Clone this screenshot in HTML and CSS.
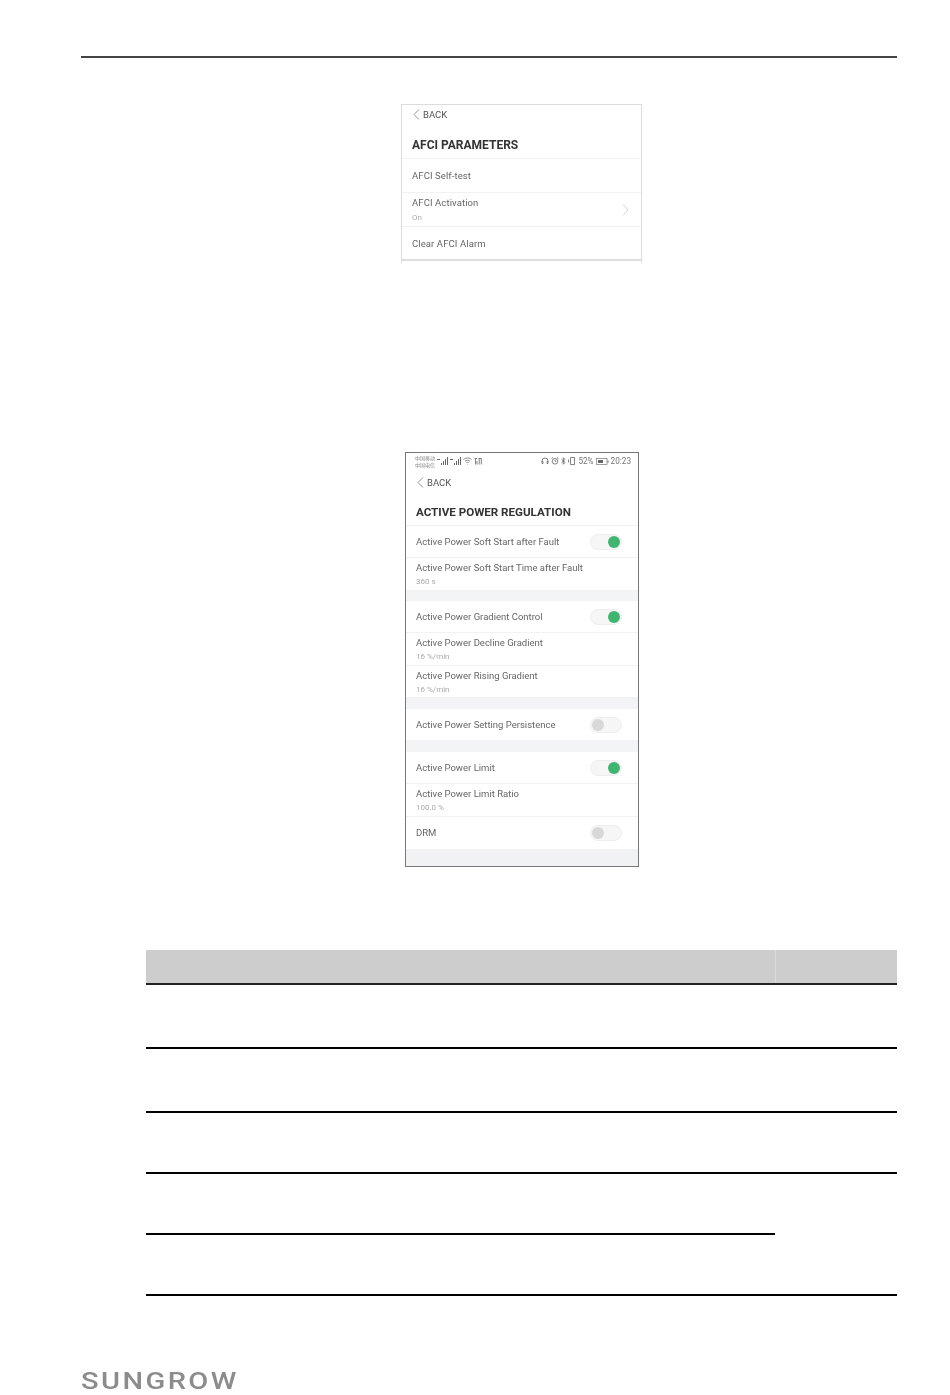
FILE: index.html
```html
<!DOCTYPE html>
<html>
<head>
  <meta charset="utf-8">
  <title>AFCI Parameters</title>
  <link rel="stylesheet" href="styles.css">
</head>
<body>
  <div class="page">
    <div class="page-rule"></div>

    <div class="screen screen-afci">
      <div class="back">
        <svg class="back-icon" width="7" height="11" viewBox="0 0 7 11"><path d="M6 .5 1 5.5l5 5" /></svg>
        BACK
      </div>
      <div class="title">AFCI PARAMETERS</div>
      <div class="row row-34"><span class="row-label">AFCI Self-test</span></div>
      <div class="row row-34">
        <div>
          <div class="row-label">AFCI Activation</div>
          <div class="row-value">On</div>
        </div>
        <svg class="chevron" width="7" height="12" viewBox="0 0 7 12"><path d="M1 .5 6 6l-5 5.5" /></svg>
      </div>
      <div class="row row-34 row-last"><span class="row-label">Clear AFCI Alarm</span></div>
    </div>

    <div class="screen screen-power">
      <div class="statusbar">
        <div class="status-left">
          <div class="carriers"><span>中国移动</span><span>中国电信</span></div>
          <svg width="11" height="8" viewBox="0 0 11 8"><path class="bars" d="M4 8h1V6H4zM6 8h1V4H6zM8 8h1V2H8zM10 8h1V0h-1z" /><path class="bars" d="M0 2h3v1H0z" /></svg>
          <svg width="11" height="8" viewBox="0 0 11 8"><path class="bars" d="M4 8h1V6H4zM6 8h1V4H6zM8 8h1V2H8zM10 8h1V0h-1z" /><path class="bars" d="M0 2h3v1H0z" /></svg>
          <svg class="line-icon" width="9" height="8" viewBox="0 0 9 8"><path d="M.5 2.500c2.300-2 5.700-2 8 0M2 4.200c1.500-1.300 3.500-1.300 5 0M3.300 5.800c.7-.6 1.700-.6 2.400 0M4.500 7.500v-.4" /></svg>
          <svg class="line-icon" width="8" height="8" viewBox="0 0 8 8"><path d="M.5 1.500h2.500M1.500 1.500v6M3 4v3.500M4.500 1.500h3M5.200 1.500v6M7.300 1.500v6" /></svg>
        </div>
        <div class="status-right">
          <svg class="line-icon" width="8" height="8" viewBox="0 0 8 8"><path d="M1 5V4a3 3 0 0 1 6 0v1M1 4.500h1v2H1zM6 4.500h1v2H6z" /></svg>
          <svg class="line-icon" width="8" height="8" viewBox="0 0 8 8"><circle cx="4" cy="4.300" r="2.800" /><path d="M4 2.800v1.600h1.200M.5 1.500 2 .5M7.500 1.500 6 .5" /></svg>
          <svg class="line-icon" width="5" height="8" viewBox="0 0 5 8"><path d="M.5 2.200 4 5.500 2.300 7.300V.7L4 2.500.5 5.800" /></svg>
          <svg class="line-icon" width="8" height="8" viewBox="0 0 8 8"><path d="M2.500.5h4v7h-4zM.5 2.500v3" /></svg>
          <span class="status-text">52%</span>
          <svg class="battery" width="13" height="7" viewBox="0 0 13 7"><rect x=".5" y=".5" width="10.500" height="6" /><path class="battery-fill" d="M2 2h5v3H2z" /><path class="battery-fill" d="M11.500 2.500h1v2h-1z" /></svg>
          <span class="status-text">20:23</span>
        </div>
      </div>
      <div class="back back-power">
        <svg class="back-icon" width="7" height="11" viewBox="0 0 7 11"><path d="M6 .5 1 5.500l5 5" /></svg>
        BACK
      </div>
      <div class="title title-power">ACTIVE POWER REGULATION</div>

      <div class="row row-32">
        <span class="row-label">Active Power Soft Start after Fault</span>
        <span class="toggle toggle-on"></span>
      </div>
      <div class="row row-33">
        <div>
          <div class="row-label">Active Power Soft Start Time after Fault</div>
          <div class="row-value">360 s</div>
        </div>
      </div>
      <div class="gap"></div>
      <div class="row row-32">
        <span class="row-label">Active Power Gradient Control</span>
        <span class="toggle toggle-on"></span>
      </div>
      <div class="row row-33">
        <div>
          <div class="row-label">Active Power Decline Gradient</div>
          <div class="row-value">16 %/min</div>
        </div>
      </div>
      <div class="row row-32">
        <div>
          <div class="row-label">Active Power Rising Gradient</div>
          <div class="row-value">16 %/min</div>
        </div>
      </div>
      <div class="gap gap-wide"></div>
      <div class="row row-32">
        <span class="row-label">Active Power Setting Persistence</span>
        <span class="toggle"></span>
      </div>
      <div class="gap gap-wide"></div>
      <div class="row row-32">
        <span class="row-label">Active Power Limit</span>
        <span class="toggle toggle-on"></span>
      </div>
      <div class="row row-33">
        <div>
          <div class="row-label">Active Power Limit Ratio</div>
          <div class="row-value">100.0 %</div>
        </div>
      </div>
      <div class="row row-33">
        <span class="row-label">DRM</span>
        <span class="toggle"></span>
      </div>
      <div class="screen-foot"></div>
    </div>

    <div class="table">
      <div class="table-head">
        <div class="cell-main"></div>
        <div class="cell-side"></div>
      </div>
      <div class="table-row tr-64"><div class="cell-main"></div><div class="cell-side"></div></div>
      <div class="table-row tr-64"><div class="cell-main"></div><div class="cell-side"></div></div>
      <div class="table-row tr-61"><div class="cell-main"></div><div class="cell-side"></div></div>
      <div class="table-row tr-61"><div class="cell-main"></div><div class="cell-side cell-merged"></div></div>
      <div class="table-row tr-61"><div class="cell-main"></div><div class="cell-side"></div></div>
    </div>

    <div class="logo">SUNGROW</div>
  </div>
</body>
</html>
```

FILE: styles.css
```css
html, body {
  margin: 0;
  padding: 0;
  background: #fff;
}

.page {
  width: 950px;
  height: 1395px;
  overflow: hidden;
  padding-top: 56px;
  box-sizing: border-box;
  font-family: Roboto, "Liberation Sans", sans-serif;
  color: #666;
}

.page-rule {
  margin: 0 53px 0 81px;
  height: 2px;
  background: #444;
}

.screen {
  background: #fff;
  box-sizing: border-box;
  overflow: hidden;
  filter: blur(0.3px);
}

.screen-afci {
  width: 241px;
  height: 159px;
  margin: 46px 0 0 401px;
  border: 1px solid #dcdcdc;
  border-bottom: none;
}

.screen-power {
  width: 234px;
  height: 415px;
  margin: 189px 0 0 405px;
  border: 1px solid #777;
}

/* header of both phone shots */
.back {
  display: flex;
  align-items: center;
  gap: 3px;
  height: 18px;
  padding-left: 11px;
  font-size: 9.5px;
  color: #555;
}

.back-icon, .chevron {
  fill: none;
  stroke: #777;
  stroke-width: 0.8;
}

.chevron {
  stroke: #ccc;
}

.title {
  height: 36px;
  padding: 15px 0 0 10px;
  box-sizing: border-box;
  font-size: 12px;
  font-weight: 700;
  color: #333;
  border-bottom: 1px solid #f2f2f2;
}

.back-power {
  height: 20px;
}

.title-power {
  height: 34px;
  padding-top: 13px;
  font-size: 11.6px;
}

/* list rows */
.row {
  display: flex;
  align-items: center;
  justify-content: space-between;
  padding: 0 16px 0 10px;
  box-sizing: border-box;
  border-bottom: 1px solid #f2f2f2;
}

.screen-afci .row {
  padding-right: 12px;
}

.screen-afci .row-label {
  letter-spacing: 0.1px;
}

.screen-afci .row-value {
  margin-top: 4px;
}

.row-34 { height: 34px; }
.row-33 { height: 33px; }
.row-32 { height: 32px; }

.row-last {
  padding-top: 1px;
  border-bottom: 2px solid #ddd;
}

.row-label {
  font-size: 9.5px;
  line-height: 12px;
}

.row-value {
  margin-top: 3px;
  font-size: 8px;
  line-height: 9px;
  color: #aaa;
}

.gap {
  height: 10px;
  background: #f3f4f6;
}

.gap-wide {
  height: 11px;
}

.screen-foot {
  height: 17px;
  background: #f1f2f4;
}

.toggle {
  position: relative;
  width: 32px;
  height: 16px;
  border-radius: 8px;
  background: #f6f6f6;
  border: 1px solid #eee;
  box-sizing: border-box;
}

/* the knob sits over the track */
.toggle::after {
  content: "";
  position: absolute;
  top: 1px;
  left: 1px;
  width: 12px;
  height: 12px;
  border-radius: 50%;
  background: #d8d8d8;
}

.toggle-on::after {
  left: auto;
  right: 1px;
  background: #3fb56f;
}

/* status bar */
.statusbar {
  display: flex;
  justify-content: space-between;
  align-items: center;
  height: 19px;
  padding: 0 7px 3px 9px;
  box-sizing: border-box;
}

.status-left, .status-right {
  display: flex;
  align-items: center;
  gap: 2px;
}

.carriers {
  display: flex;
  flex-direction: column;
  font-family: "Noto Sans CJK SC", sans-serif;
  font-size: 5px;
  line-height: 7px;
  color: #888;
}

.line-icon {
  fill: none;
  stroke: #666;
  stroke-width: 0.8;
}

.bars {
  fill: #666;
}

.status-text {
  font-size: 8.2px;
  color: #777;
}

.battery {
  fill: none;
  stroke: #777;
  stroke-width: 0.7;
}

.battery-fill {
  fill: #666;
  stroke: none;
}

/* table at the bottom, text is blank in the shot */
.table {
  width: 751px;
  margin: 83px 0 0 146px;
}

.table-head, .table-row {
  display: flex;
}

.table-head {
  height: 35px;
}

.table-head .cell-main, .table-head .cell-side {
  background: #cdcdcd;
  border-bottom: 2px solid #222;
  box-sizing: border-box;
}

.table-head .cell-side {
  box-shadow: inset 1px 0 0 #dadada;
}

.cell-main {
  width: 629px;
}

.cell-side {
  flex: 1;
}

.table-row .cell-main, .table-row .cell-side {
  border-bottom: 2px solid #000;
  box-sizing: border-box;
}

.table-row .cell-merged {
  border-bottom: none;
}

.tr-64 { height: 64px; }
.tr-61 { height: 61px; }

.logo {
  margin: 73px 0 0 81px;
  width: 120px;
  font-size: 24px;
  line-height: 24px;
  font-weight: 500;
  letter-spacing: 2px;
  color: #8c8c8c;
  transform: scaleX(1.21);
  transform-origin: left center;
}
```
